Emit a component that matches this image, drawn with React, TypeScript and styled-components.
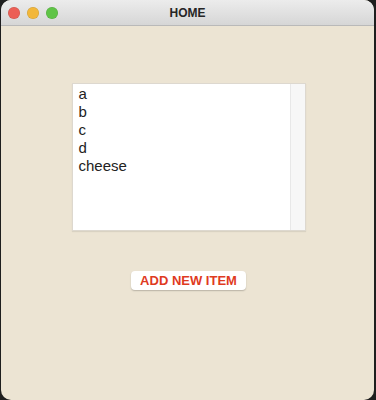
import React from "react";
import styled, { createGlobalStyle } from "styled-components";

const GlobalStyle = createGlobalStyle`
  html, body {
    margin: 0;
    padding: 0;
    background: #1e1e1e;
    height: 400px;
    overflow: hidden;
  }
`;

const items = ["a", "b", "c", "d", "cheese"];

const lights = ["#ec5f56", "#f2b73a", "#5fc446"];

const App = () => {
  return (
    <>
      <GlobalStyle />
      <Window>
        <TitleBar>
          <Lights>
            {lights.map((c) => (
              <Light key={c} color={c} />
            ))}
          </Lights>
          <Title>HOME</Title>
        </TitleBar>
        <Content>
          <ListBox>
            <ListItems>
              {items.map((item) => (
                <ListItem key={item}>{item}</ListItem>
              ))}
            </ListItems>
            <ScrollTrack />
          </ListBox>
          <AddButton type="button">ADD NEW ITEM</AddButton>
        </Content>
      </Window>
    </>
  );
};

const Window = styled.div`
  width: 373px;
  height: 400px;
  margin-left: 1px;
  display: flex;
  flex-direction: column;
  background: #ece4d3;
  border-radius: 10px;
  overflow: hidden;
  font-family: "Liberation Sans", Arial, sans-serif;
`;

const TitleBar = styled.div`
  position: relative;
  height: 25px;
  display: flex;
  align-items: center;
  justify-content: center;
  background: linear-gradient(#ececec, #d6d6d6);
  border-bottom: 1px solid #b9b9b9;
`;

const Lights = styled.div`
  position: absolute;
  left: 7px;
  top: 7px;
  display: flex;
  gap: 7px;
`;

const Light = styled.span<{ color: string }>`
  width: 12px;
  height: 12px;
  border-radius: 50%;
  background: ${(p) => p.color};
  box-shadow: inset 0 0 0 0.5px rgba(0, 0, 0, 0.15);
`;

const Title = styled.div`
  font-size: 12px;
  font-weight: bold;
  color: #262626;
  padding-top: 1px;
`;

const Content = styled.div`
  display: flex;
  flex-direction: column;
  align-items: center;
  padding: 57px 0 0 2px;
  gap: 40px;
`;

const ListBox = styled.div`
  width: 234px;
  height: 148px;
  box-sizing: border-box;
  display: flex;
  background: #fff;
  border: 1px solid #ddd8cf;
  box-shadow: 0 1px 1px rgba(0, 0, 0, 0.08);
`;

const ListItems = styled.div`
  flex: 1;
  padding: 1px 0 0 6px;
  font-size: 15px;
  line-height: 18px;
  color: #222;
`;

const ListItem = styled.div``;

const ScrollTrack = styled.div`
  width: 14px;
  background: #f7f7f7;
  border-left: 1px solid #e8e8e8;
`;

const AddButton = styled.button`
  height: 19px;
  padding: 0 9px;
  border: none;
  border-radius: 4px;
  background: #fff;
  box-shadow: 0 1px 1.5px rgba(0, 0, 0, 0.22);
  font-family: "Liberation Sans", Arial, sans-serif;
  font-size: 13px;
  font-weight: bold;
  line-height: 19px;
  color: #df3b1f;
  cursor: pointer;
`;

export default App;
